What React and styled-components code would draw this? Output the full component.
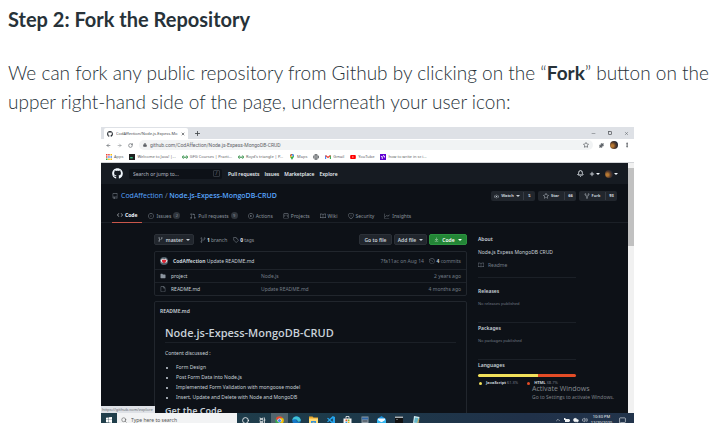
import React from "react";
import styled, { createGlobalStyle, css } from "styled-components";
import {
  ArrowLeft, ArrowRight, RotateCw, Lock, Star, Puzzle, EllipsisVertical, Plus, X, Minus,
  Square, Globe, Search, Circle, ChevronUp, Volume2, MessageSquare, Cloud, Bell,
} from "lucide-react";
import { FaGithub, FaYoutube } from "react-icons/fa";
import {
  GoRepo, GoCode, GoIssueOpened, GoGitPullRequest, GoPlay, GoProject, GoBook, GoShield,
  GoGraph, GoGitBranch, GoTag, GoHistory, GoFileDirectoryFill, GoFile, GoEye, GoStar,
  GoRepoForked, GoDownload,
} from "react-icons/go";

const Global = createGlobalStyle`
  *, *::before, *::after { box-sizing: border-box; }
  body { margin: 0; background: #fff; overflow: hidden; }
  button, input { font: inherit; color: inherit; border: 0; padding: 0; margin: 0; background: none; }
  a { color: inherit; text-decoration: none; }
  svg { display: block; flex: none; }
`;

const Article = styled.article`
  padding: 5px 8px 0;
  color: #273239;
  font-family: Lato, "Open Sans", sans-serif;
`;
const StepTitle = styled.h2`
  margin: 0 0 24px;
  font-size: 20px;
  line-height: 29px;
  font-weight: 700;
`;
const Copy = styled.p`
  margin: 0;
  font-size: 19px;
  line-height: 29px;
  font-weight: 300;
  color: #273239;
  strong { font-weight: 700; }
`;
const Desktop = styled.figure`
  position: relative;
  margin: 11px 81px 0 93px;
  overflow: hidden;
  font-family: "Noto Sans", sans-serif;
  font-size: 5px;
  line-height: 8px;
  white-space: nowrap;
`;

/* Browser chrome */
const TabStrip = styled.div`
  display: flex;
  align-items: flex-end;
  gap: 6px;
  height: 12px;
  padding-left: 3px;
  background: #dee1e6;
  color: #45494d;
`;
const BrowserTab = styled.div`
  display: flex;
  align-items: center;
  gap: 3px;
  width: 84px;
  height: 11px;
  padding: 0 3px;
  border-radius: 2px 2px 0 0;
  background: #fff;
  font-size: 4px;
  span { flex: 1; overflow: hidden; }
`;
const IconButton = styled.button`
  display: flex;
  align-items: center;
  justify-content: center;
  gap: 1px;
  min-height: 11px;
`;
const WindowControls = styled.div`
  display: flex;
  align-items: center;
  gap: 12px;
  height: 12px;
  margin-left: auto;
  padding-right: 5px;
`;
const Toolbar = styled.div`
  display: flex;
  align-items: center;
  gap: 6px;
  height: 12px;
  padding: 0 4px 0 5px;
  background: #fff;
  color: #5f6368;
`;
const AddressBar = styled.label`
  display: flex;
  align-items: center;
  flex: 1;
  gap: 3px;
  height: 10px;
  padding: 0 4px;
  border-radius: 5px;
  background: #f1f3f4;
  input { flex: 1; min-width: 0; height: 8px; outline: 0; font-family: Roboto, sans-serif; }
`;
const Bookmarks = styled.nav`
  display: flex;
  align-items: center;
  gap: 6px;
  height: 12px;
  padding-left: 5px;
  border-bottom: 1px solid #d3d5d8;
  background: #fff;
  color: #5c6064;
  font-size: 4px;
`;
const Bookmark = styled.a`
  display: flex;
  align-items: center;
  gap: 2px;
`;
const Avatar = styled.span`
  width: 8px;
  height: 8px;
  border-radius: 50%;
  background: radial-gradient(circle at 30% 60%, #b87932 0 15%, #5a3c2a 45%, #1d2433 75%);
`;

/* Web page */
const Viewport = styled.div`
  display: flex;
  height: 250px;
  background: #0d1117;
  color: #c9d1d9;
`;
const Page = styled.div`
  flex: 1;
  min-width: 0;
  overflow: hidden;
`;
const Scrollbar = styled.div`
  width: 6px;
  padding-top: 5px;
  background: #f1f1f1;
  &::before { content: ""; display: block; height: 78px; background: #c1c1c1; }
`;
const SiteHeader = styled.header`
  display: flex;
  align-items: center;
  gap: 6px;
  height: 21px;
  padding: 0 10px 0 11px;
  background: #161b22;
  color: #f0f6fc;
`;
const SiteSearch = styled.label`
  display: flex;
  align-items: center;
  width: 93px;
  height: 10px;
  padding: 0 2px 0 4px;
  border-radius: 2px;
  background: #0d1117;
  input { flex: 1; min-width: 0; height: 8px; outline: 0; }
  input::placeholder { color: #b3bac2; opacity: 1; }
  kbd { width: 7px; height: 7px; border: 1px solid #30363d; border-radius: 1px; font: inherit; line-height: 5px; text-align: center; color: #6e7681; }
`;
const SiteNav = styled.nav`
  display: flex;
  gap: 5px;
  font-family: "Open Sans", sans-serif;
  font-weight: 600;
`;
const HeaderActions = styled.div`
  display: flex;
  align-items: center;
  gap: 5px;
  margin-left: auto;
`;
const RepoHeader = styled.div`
  height: 39px;
  padding: 6px 11px 0 11px;
  border-bottom: 1px solid #1b2027;
`;
const RepoTop = styled.div`
  display: flex;
  align-items: center;
  gap: 3px;
  height: 12px;
  color: #8b949e;
`;
const RepoName = styled.h3`
  margin: 0 auto 0 0;
  font-family: "Open Sans", sans-serif;
  font-size: 7px;
  line-height: 12px;
  font-weight: 400;
  color: #58a6ff;
  span { color: #8b949e; }
  a:last-child { font-weight: 600; }
`;
const SplitButton = styled.button`
  display: flex;
  align-items: center;
  justify-content: space-between;
  width: ${(p) => (p.$wide ? "44px" : "38px")};
  height: 10px;
  border-radius: 2px;
  background: #21262d;
  color: #c9d1d9;
  font-size: 4px;
  font-weight: 700;
  span { display: flex; align-items: center; justify-content: center; gap: 2px; flex: 1; }
  b { width: 12px; border-left: 1px solid #363c44; text-align: center; }
`;
const RepoTabs = styled.nav`
  display: flex;
  gap: 10px;
  height: 20px;
  padding-top: 6px;
  color: #8b949e;
`;
const RepoTab = styled.a`
  display: flex;
  align-items: center;
  gap: 2px;
  height: 15px;
  padding-left: ${(p) => (p.$active ? "5px" : "0")};
  ${(p) => p.$active && css`
    padding-right: 5px;
    margin-right: -4px;
    border-bottom: 1px solid #c9574b;
    color: #f0f6fc;
    font-weight: 700;
  `}
`;
const Counter = styled.span`
  width: 7px;
  height: 7px;
  border-radius: 4px;
  background: #30363d;
  font-size: 4px;
  line-height: 7px;
  text-align: center;
`;
const Content = styled.div`
  display: grid;
  grid-template-columns: minmax(0, 1fr) 98px;
  gap: 11px;
  padding: 11px 52px 0 53px;
`;
const FileBar = styled.div`
  display: flex;
  align-items: center;
  gap: 6px;
  height: 11px;
  margin-bottom: 6px;
  color: #8b949e;
  b { color: #e3e8ed; }
`;
const Stat = styled.a`
  display: flex;
  align-items: center;
  gap: 1px;
`;
const Actions = styled.div`
  display: flex;
  gap: 2px;
  margin-left: auto;
`;
const Button = styled.button`
  display: flex;
  align-items: center;
  justify-content: center;
  gap: 3px;
  min-width: ${(p) => (p.$branch ? "40px" : p.$primary ? "38px" : "33px")};
  height: 11px;
  border: 1px solid ${(p) => (p.$primary ? "#2c9440" : "#2b3037")};
  border-radius: 2px;
  background: ${(p) => (p.$primary ? "#238636" : "#21262d")};
  color: ${(p) => (p.$primary ? "#fff" : "#c9d1d9")};
  font-weight: 600;
`;
const Files = styled.table`
  width: 100%;
  height: 45px;
  border: 1px solid #21262d;
  border-radius: 2px;
  border-spacing: 0;
  table-layout: fixed;
  color: #747d87;
  td { padding: 0 5px; height: 13px; }
  tr + tr td { border-top: 1px solid #1d2229; }
  tr:first-child td { height: 17px; }
`;
const NameColumn = styled.col`
  width: 101px;
`;
const AgeColumn = styled.col`
  width: 100px;
`;
const Cell = styled.span`
  display: flex;
  align-items: center;
  justify-content: ${(p) => (p.$end ? "flex-end" : "flex-start")};
  gap: ${(p) => (p.$end ? "2px" : "5px")};
  color: ${(p) => (p.$name ? "#c9d1d9" : "#747d87")};
  b { color: #c9d1d9; }
`;
const Readme = styled.section`
  height: 130px;
  margin-top: 5px;
  padding: 4px 10px 0;
  border: 1px solid #21262d;
  border-radius: 2px;
  h4 { margin: 0 -5px 9px; font-size: 5px; line-height: 10px; font-weight: 600; }
  h1 { margin: 0 0 5px; padding-bottom: 2px; border-bottom: 1px solid #1b2027; font-family: "Open Sans", sans-serif; font-size: 11px; line-height: 15px; font-weight: 600; }
  h2 { margin: 3px 0 0; font-size: 9px; line-height: 12px; font-weight: 600; }
  p { margin: 0; line-height: 10px; }
  ul { margin: 4px 0 0; padding-left: 11px; line-height: 10px; }
`;
const Side = styled.aside`
  display: flex;
  flex-direction: column;
`;
const Panel = styled.section`
  height: 37px;
  margin-bottom: ${(p) => (p.$first ? "8px" : "0")};
  border-bottom: 1px solid ${(p) => (p.$last ? "transparent" : "#1b2027")};
  &:first-child { height: 44px; }
  h4 { margin: 0 0 4px; font-size: 5px; line-height: 10px; font-weight: 600; }
  p { display: flex; align-items: center; gap: 4px; margin: 0; line-height: 9px; }
  small { display: block; font-size: 4px; line-height: 8px; margin-top: 4px; color: #747d87; }
  a { display: flex; align-items: center; gap: 4px; margin-top: 4px; color: #747d87; }
`;
const LanguageBar = styled.div`
  height: 3px;
  border-radius: 2px;
  background: linear-gradient(90deg, #f1e05a 61%, #e34c26 61%);
`;
const Legend = styled.div`
  display: flex;
  gap: 8px;
  margin-top: 2px;
  font-size: 4px;
  color: #747d87;
  span { display: flex; align-items: center; gap: 1px; }
  b { color: #c9d1d9; }
`;
const Dot = styled.i`
  width: 3px;
  height: 3px;
  margin: 0 3px 0 1px;
  border-radius: 50%;
  background: ${(p) => p.$color};
`;
const Watermark = styled.div`
  position: absolute;
  right: 20px;
  bottom: 26px;
  color: #858a90;
  font-family: "Open Sans", sans-serif;
  font-size: 5px;
  line-height: 8px;
  strong { display: block; font-size: 7px; line-height: 8px; font-weight: 400; }
`;
const LinkStatus = styled.div`
  position: absolute;
  left: 0;
  bottom: 14px;
  width: 54px;
  height: 7px;
  padding-left: 1px;
  background: #dee1e6;
  color: #666b70;
  font-size: 4px;
  line-height: 7px;
`;

/* Desktop taskbar */
const Taskbar = styled.footer`
  display: flex;
  align-items: center;
  height: 14px;
  background: linear-gradient(90deg, #213f4b, #1d3a4a 45%, #203149 80%, #22344b);
  color: #f1f4f6;
`;
const StartButton = styled.button`
  display: flex;
  justify-content: center;
  width: 16px;
`;
const TaskSearch = styled.label`
  display: flex;
  align-items: center;
  gap: 4px;
  width: 120px;
  height: 14px;
  padding-left: 4px;
  background: #f2f3f4;
  color: #444;
  input { min-width: 0; flex: 1; height: 10px; outline: 0; }
  input::placeholder { color: #555; opacity: 1; }
`;
const TaskButton = styled.button`
  display: flex;
  align-items: center;
  justify-content: center;
  width: 17px;
  height: 14px;
  background: ${(p) => (p.$active ? "#51656e" : "transparent")};
`;
const Tray = styled.div`
  display: flex;
  align-items: center;
  gap: 3px;
  height: 14px;
  margin-left: auto;
  padding-right: 8px;
  time { font-size: 4px; line-height: 6px; text-align: center; margin-right: 4px; }
`;

const Caret = () => <svg width="4" height="2" viewBox="0 0 4 2" fill="currentColor"><path d="M0 0h4L2 2z" /></svg>;
const AppsIcon = () => (
  <svg width="6" height="6" viewBox="0 0 6 6">
    <path fill="#ea4335" d="M0 0h1.5v1.5H0zM2.2 0h1.5v1.5H2.2zM0 2.2h1.5v1.5H0z" />
    <path fill="#fbbc05" d="M4.5 0H6v1.5H4.5zM4.5 4.5H6V6H4.5zM2.2 4.5h1.5V6H2.2z" />
    <path fill="#34a853" d="M0 4.5h1.5V6H0z" /><path fill="#4285f4" d="M2.2 2.2h1.5v1.5H2.2zM4.5 2.2H6v1.5H4.5z" />
  </svg>
);
const JavaIcon = () => <svg width="6" height="6" viewBox="0 0 6 6"><path fill="#202020" d="M0 0h6v6H0z" /><path fill="#33bf80" d="M1.2 3h2.5v1.4H1.2z" /></svg>;
const GeeksIcon = () => <svg width="6" height="6" viewBox="0 0 12 12" fill="none" stroke="#2f8d46" strokeWidth="1.7"><path d="M4.500 4.500C2 2.500 0 5 1 7.500 2.500 9.500 5 8.500 5 6H1M7.500 4.500C10 2.500 12 5 11 7.500 9.500 9.500 7 8.500 7 6h4" /></svg>;
const MapsIcon = () => (
  <svg width="6" height="6" viewBox="0 0 12 12">
    <path fill="#34a853" d="M6 12C5 8.500 2 7.500 2 4a4 4 0 018 0c0 3.500-3 4.500-4 8z" /><path fill="#4285f4" d="M6 0a4 4 0 014 4L6 4z" /><path fill="#ea4335" d="M6 0a4 4 0 00-4 3l4 1z" /><path fill="#fbbc05" d="M2 4l4 0-3 4z" /><circle cx="6" cy="4" r="1.400" fill="#fff" />
  </svg>
);
const GmailIcon = () => <svg width="6" height="6" viewBox="0 0 12 12" fill="none" strokeWidth="2.200"><path stroke="#4285f4" d="M1.200 10V3" /><path stroke="#34a853" d="M10.800 10V3" /><path stroke="#ea4335" d="M1.200 3L6 7l4.800-4" /></svg>;
const YahooIcon = () => <svg width="6" height="6" viewBox="0 0 12 12"><path fill="#6001d2" d="M0 0h12v12H0z" /><path d="M2 4l2.500 3L8 2M4.500 7v3M9 4v3" fill="none" stroke="#fff" strokeWidth="1.700" /></svg>;
const CommitAvatar = () => <svg width="8" height="8" viewBox="0 0 16 16"><circle cx="8" cy="8" r="8" fill="#52616b" /><path fill="#e9eef0" d="M1 6l5-3 2 2 3-2 4 4-2 4H3z" /><path fill="#da2433" d="M4 6l2-1 2 1 2-1 3 2-1 2-4 4-4-4z" /></svg>;
const WindowsIcon = () => <svg width="6" height="6" viewBox="0 0 12 12" fill="#fff"><path d="M0 1.500l5-.7v4.700H0zM5.700.7L12 0v5.500H5.700zM0 6.200h5v4.900l-5-.7zM5.700 6.200H12V12l-6.300-.8z" /></svg>;
const TaskViewIcon = () => <svg width="7" height="7" viewBox="0 0 14 14" fill="none" stroke="#fff" strokeWidth="1.300"><path d="M2 1v2h6V1M2 5h6v4H2zM2 13v-2h6v2M11 1v12M10 6h3" /></svg>;
const ChromeIcon = () => (
  <svg width="9" height="9" viewBox="0 0 18 18"><circle cx="9" cy="9" r="8.500" fill="#34a853" /><path fill="#ea4335" d="M1.600 4.700a8.500 8.500 0 0114.800 0H9L5.300 11z" /><path fill="#fbbc05" d="M16.400 4.700A8.500 8.500 0 018.500 17.500L12.700 11 9 4.700z" /><circle cx="9" cy="9" r="4.200" fill="#fff" /><circle cx="9" cy="9" r="3.200" fill="#4285f4" /></svg>
);
const EdgeIcon = () => <svg width="9" height="9" viewBox="0 0 18 18"><circle cx="9" cy="9" r="8.500" fill="#1478c9" /><path fill="#42c3d4" d="M.5 8.500C1-.5 14-2.500 17.300 7c.8 4-2.800 6-7.300 4.500 2-1.500 1.500-4-1-4.700C6 6 2 6.500.5 8.500z" /><path fill="#203c4c" d="M10 8c-2 2-.5 5 6 4.500l1-2C14 13 9 11 10 8z" /></svg>;
const FolderIcon = () => <svg width="9" height="8" viewBox="0 0 18 16"><path fill="#e9a72b" d="M0 1h7l2 2h9v12H0z" /><path fill="#ffdb78" d="M0 5h18v10H0z" /><path fill="#3c91d2" d="M4 10h10v5h-3v-2H7v2H4z" /></svg>;
const CodeIcon = () => <svg width="8" height="8" viewBox="0 0 16 16" fill="#25a4ed"><path d="M11.500 0L16 2v12l-4.500 2L5 10l-3 2.500-2-1L3.500 8 0 4.500l2-1L5 6zm0 4.500L7 8l4.500 3.500z" /></svg>;
const StoreIcon = () => <svg width="9" height="9" viewBox="0 0 18 18"><path fill="none" stroke="#fff" strokeWidth="1.500" d="M6 5V1h6v4" /><path fill="#f5f5f5" d="M1 5h16v12H1z" /><path fill="#e65029" d="M5 7h3.500v3.500H5z" /><path fill="#79b92a" d="M9.500 7H13v3.500H9.500z" /><path fill="#28a6e4" d="M5 11.500h3.500V15H5z" /><path fill="#f4b71e" d="M9.500 11.500H13V15H9.500z" /></svg>;
const PanelIcon = () => <svg width="8" height="8" viewBox="0 0 16 16"><path fill="#8f9ca6" d="M1 1h14v14H1z" /><path fill="#3168a7" d="M2 3h12v4H2z" /><path fill="#323d48" d="M3 9h10v2H3z" /></svg>;
const BatteryIcon = () => <svg width="6" height="6" viewBox="0 0 12 12" fill="currentColor"><path d="M2 4h9v6H2zM11 6h1v2h-1zM0 2h3v4H0z" /></svg>;
const MailIcon = () => <svg width="9" height="8" viewBox="0 0 18 16"><path fill="#168fdc" d="M0 6l9-6 9 6v10H0z" /><path fill="#f2faff" d="M2 5h14v4l-7 4-7-4z" /><path fill="#36baf3" d="M0 7l9 6 9-6v9H0z" /></svg>;
const TerminalIcon = () => <svg width="8" height="8" viewBox="0 0 16 16"><path fill="#111" d="M0 1h16v14H0z" /><path fill="#aab3b9" d="M0 1h16v3H0zM2 6h4v1H2z" /></svg>;
const NoteIcon = () => <svg width="8" height="9" viewBox="0 0 16 18"><path fill="#d5eef3" d="M4 0l11 2-3 15-10-2z" /><path fill="#65b6c9" d="M6 3l7 1-2 10-7-1z" /><path fill="#c6a34c" d="M13 5l2 1-4 11-2 1z" /></svg>;

const bookmarks = [
  ["Apps", AppsIcon], ["Welcome to Java! |...", JavaIcon], ["GFG Courses | Practi...", GeeksIcon],
  ["Royd's triangle | P...", GeeksIcon], ["Maps", MapsIcon], ["", () => <Globe size={6} strokeWidth={3} />],
  ["Gmail", GmailIcon], ["YouTube", () => <FaYoutube size={6} color="#f00" />], ["how to write in sc i...", YahooIcon],
];
const repoTabs = [
  ["Code", GoCode], ["Issues", GoIssueOpened, 2], ["Pull requests", GoGitPullRequest, 9], ["Actions", GoPlay],
  ["Projects", GoProject], ["Wiki", GoBook], ["Security", GoShield], ["Insights", GoGraph],
];
const taskApps = [
  ["Cortana", () => <Circle size={7} strokeWidth={3} />], ["Task view", TaskViewIcon], ["Chrome", ChromeIcon],
  ["Edge", EdgeIcon], ["File Explorer", FolderIcon], ["Code editor", CodeIcon], ["Store", StoreIcon],
  ["Control panel", PanelIcon], ["Mail", MailIcon], ["Terminal", TerminalIcon], ["Notepad", NoteIcon],
];

function BrowserChrome() {
  return (
    <>
      <TabStrip>
        <BrowserTab><FaGithub size={6} color="#24292e" /><span>CodAffection/Node.js-Expess-Mo</span><X size={4} strokeWidth={4} /></BrowserTab>
        <IconButton aria-label="New tab"><Plus size={7} strokeWidth={3} /></IconButton>
        <WindowControls>
          <IconButton aria-label="Minimize"><Minus size={5} /></IconButton>
          <IconButton aria-label="Restore"><Square size={4} strokeWidth={4} /></IconButton>
          <IconButton aria-label="Close"><X size={5} /></IconButton>
        </WindowControls>
      </TabStrip>
      <Toolbar>
        <IconButton aria-label="Back"><ArrowLeft size={5} strokeWidth={3} /></IconButton>
        <IconButton aria-label="Forward"><ArrowRight size={5} /></IconButton>
        <IconButton aria-label="Reload"><RotateCw size={5} strokeWidth={3} /></IconButton>
        <AddressBar>
          <Lock size={4} fill="currentColor" />
          <input aria-label="Address" defaultValue="github.com/CodAffection/Node.js-Expess-MongoDB-CRUD" />
          <Star size={6} strokeWidth={3} />
        </AddressBar>
        <IconButton aria-label="Extensions"><Puzzle size={5} fill="currentColor" /></IconButton>
        <Avatar />
        <IconButton aria-label="Menu"><EllipsisVertical size={6} strokeWidth={4} /></IconButton>
      </Toolbar>
      <Bookmarks>
        {bookmarks.map(([label, Icon], i) => <Bookmark href="#" key={i} aria-label={label || "Website"}><Icon />{label}</Bookmark>)}
      </Bookmarks>
    </>
  );
}

function Repository() {
  return (
    <Page>
      <SiteHeader>
        <FaGithub size={11} />
        <SiteSearch><input aria-label="Search" placeholder="Search or jump to..." /><kbd>/</kbd></SiteSearch>
        <SiteNav><a href="#">Pull requests</a><a href="#">Issues</a><a href="#">Marketplace</a><a href="#">Explore</a></SiteNav>
        <HeaderActions>
          <IconButton aria-label="Notifications"><Bell size={7} strokeWidth={3} /></IconButton>
          <IconButton aria-label="Create"><Plus size={6} strokeWidth={3} /><Caret /></IconButton>
          <IconButton aria-label="Account"><Avatar /><Caret /></IconButton>
        </HeaderActions>
      </SiteHeader>
      <RepoHeader>
        <RepoTop>
          <GoRepo size={6} />
          <RepoName><a href="#">CodAffection</a> <span>/</span> <a href="#">Node.js-Expess-MongoDB-CRUD</a></RepoName>
          <SplitButton $wide><span><GoEye size={5} />Watch <Caret /></span><b>5</b></SplitButton>
          <SplitButton><span><GoStar size={6} />Star</span><b>66</b></SplitButton>
          <SplitButton><span><GoRepoForked size={6} />Fork</span><b>93</b></SplitButton>
        </RepoTop>
        <RepoTabs>
          {repoTabs.map(([label, Icon, count], i) => (
            <RepoTab href="#" key={label} $active={i === 0}><Icon size={6} />{label}{count && <Counter>{count}</Counter>}</RepoTab>
          ))}
        </RepoTabs>
      </RepoHeader>
      <Content>
        <main>
          <FileBar>
            <Button $branch><GoGitBranch size={5} />master <Caret /></Button>
            <Stat href="#"><GoGitBranch size={6} /><b>1</b> branch</Stat>
            <Stat href="#"><GoTag size={6} /><b>0</b> tags</Stat>
            <Actions>
              <Button>Go to file</Button><Button>Add file <Caret /></Button>
              <Button $primary><GoDownload size={5} />Code <Caret /></Button>
            </Actions>
          </FileBar>
          <Files>
            <colgroup><NameColumn /><col /><AgeColumn /></colgroup>
            <tbody>
              <tr>
                <td colSpan="2"><Cell $name><CommitAvatar /><span><b>CodAffection</b> Update README.md</span></Cell></td>
                <td><Cell $end>7fa11ac on Aug 14 &nbsp;<GoHistory size={6} /><span><b>4</b> commits</span></Cell></td>
              </tr>
              <tr><td><Cell $name><GoFileDirectoryFill size={6} color="#8b949e" />project</Cell></td><td>Node.js</td><td><Cell $end>2 years ago</Cell></td></tr>
              <tr><td><Cell $name><GoFile size={6} color="#8b949e" />README.md</Cell></td><td>Update README.md</td><td><Cell $end>4 months ago</Cell></td></tr>
            </tbody>
          </Files>
          <Readme>
            <h4>README.md</h4>
            <h1>Node.js-Expess-MongoDB-CRUD</h1>
            <p>Content discussed :</p>
            <ul>
              <li>Form Design</li><li>Post Form Data into Node.js</li>
              <li>Implemented Form Validation with mongoose model</li>
              <li>Insert, Update and Delete with Node and MongoDB</li>
            </ul>
            <h2>Get the Code</h2>
          </Readme>
        </main>
        <Side>
          <Panel $first><h4>About</h4><p>Node.js Expess MongoDB CRUD</p><a href="#"><GoBook size={6} />Readme</a></Panel>
          <Panel><h4>Releases</h4><small>No releases published</small></Panel>
          <Panel><h4>Packages</h4><small>No packages published</small></Panel>
          <Panel $last>
            <h4>Languages</h4>
            <LanguageBar />
            <Legend><span><Dot $color="#f1e05a" /><b>JavaScript</b> 61.3%</span><span><Dot $color="#e34c26" /><b>HTML</b> 38.7%</span></Legend>
          </Panel>
        </Side>
      </Content>
    </Page>
  );
}

export default function App() {
  return (
    <Article>
      <Global />
      <StepTitle>Step 2: Fork the Repository</StepTitle>
      <Copy>
        We can fork any public repository from Github by clicking on the “<strong>Fork</strong>” button on the upper right-hand side of the page, underneath your user icon:
      </Copy>
      <Desktop>
        <BrowserChrome />
        <Viewport><Repository /><Scrollbar /></Viewport>
        <Taskbar>
          <StartButton aria-label="Start"><WindowsIcon /></StartButton>
          <TaskSearch><Search size={6} /><input aria-label="Search Windows" placeholder="Type here to search" /></TaskSearch>
          {taskApps.map(([label, Icon], i) => <TaskButton key={label} aria-label={label} $active={i === 2}><Icon /></TaskButton>)}
          <Tray>
            <ChevronUp size={6} /><BatteryIcon /><Cloud size={6} fill="currentColor" /><Volume2 size={6} />
            <time>10:30 PM<br />12/20/2020</time><MessageSquare size={7} />
          </Tray>
        </Taskbar>
        <Watermark><strong>Activate Windows</strong>Go to Settings to activate Windows.</Watermark>
        <LinkStatus>https://github.com/explore</LinkStatus>
      </Desktop>
    </Article>
  );
}
